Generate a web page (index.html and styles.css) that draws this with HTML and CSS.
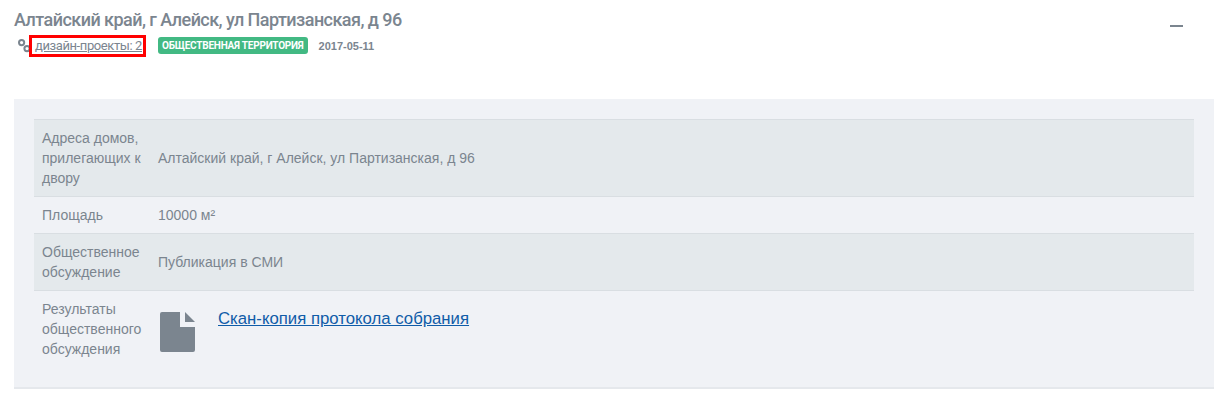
FILE: index.html
```html
<!DOCTYPE html>
<html lang="ru">
<head>
<meta charset="utf-8">
<title>Алтайский край</title>
<link rel="stylesheet" href="styles.css">
</head>
<body>
<header class="head">
  <div class="head-main">
    <h2 class="title">Алтайский край, г Алейск, ул Партизанская, д 96</h2>
    <div class="meta">
      <svg class="chain" viewBox="0 0 14 14" width="14" height="14"><g fill="none" stroke="#7b858f" stroke-width="2"><circle cx="3.6" cy="3.6" r="2.6"/><circle cx="9" cy="9.6" r="2.6"/></g></svg>
      <a class="projects" href="#">дизайн-проекты: 2</a>
      <span class="badge">ОБЩЕСТВЕННАЯ ТЕРРИТОРИЯ</span>
      <span class="date">2017-05-11</span>
    </div>
  </div>
  <span class="collapse"></span>
</header>
<section class="panel">
  <table class="info">
    <tr class="odd"><th>Адреса домов, прилегающих к двору</th><td>Алтайский край, г Алейск, ул Партизанская, д 96</td></tr>
    <tr><th>Площадь</th><td>10000 м²</td></tr>
    <tr class="odd"><th>Общественное обсуждение</th><td>Публикация в СМИ</td></tr>
    <tr class="last"><th>Результаты общественного обсуждения</th><td>
      <div class="doc">
        <svg class="doc-icon" viewBox="0 0 35 40" width="35" height="40"><path fill="#7b858f" d="M2 0H20V15H35V38a2 2 0 0 1-2 2H2a2 2 0 0 1-2-2V2a2 2 0 0 1 2-2Z"/><path fill="#7b858f" d="M25 0L35 10H25Z"/></svg>
        <a class="doc-link" href="#">Скан-копия протокола собрания</a>
      </div>
    </td></tr>
  </table>
</section>
</body>
</html>
```
FILE: styles.css
```css
* { box-sizing: border-box; }
html, body { margin: 0; padding: 0; background: #fff; }
body { width: 1224px; height: 402px; overflow: hidden; font-family: "Liberation Sans", Arial, sans-serif; font-size: 14px; color: #7b858f; }
.head { display: flex; justify-content: space-between; height: 99px; padding: 8px 41px 0 14px; }
.title { margin: 0; font-family: Roboto, sans-serif; font-size: 18px; font-weight: 500; line-height: 24px; letter-spacing: -0.55px; color: #7b858f; }
.meta { display: flex; align-items: center; height: 18px; margin-top: 5px; padding-left: 4px; }
.chain { flex: none; }
.projects { display: block; flex: none; width: 111px; height: 16px; padding-left: 3px; font-family: Roboto, sans-serif; font-size: 13px; line-height: 16px; letter-spacing: -0.4px; white-space: nowrap; color: #7b858f; text-decoration: underline; outline: 3px solid #f00; }
.badge { align-self: flex-start; margin-left: 15px; padding: 0 4px; height: 17px; line-height: 17px; border-radius: 3px; background: #42b983; color: #fff; font-family: Roboto, sans-serif; font-size: 10px; font-weight: 700; letter-spacing: -0.22px; }
.date { margin-left: 11px; font-size: 11px; font-weight: 700; }
.collapse { width: 13px; height: 2px; margin-top: 17px; background: #7b858f; }
.panel { width: 1200px; height: 290px; margin-left: 14px; padding: 20px; background: #f0f2f6; border-bottom: 2px solid #e5e8ec; }
.info { width: 100%; border-collapse: collapse; line-height: 20px; }
.info th, .info td { padding: 8px; border-top: 1px solid #d9dee2; vertical-align: middle; text-align: left; font-weight: 400; }
.info th { width: 116px; }
.info td { padding-left: 8px; }
.odd { background: #e4e9ec; }
.last td { vertical-align: top; }
.doc { display: flex; align-items: flex-start; padding: 5px 0 0 2px; }
.doc-icon { flex: none; margin-top: 8px; }
.doc-link { margin: 5px 0 0 23px; font-size: 16.75px; line-height: 20px; color: #0f5ca8; text-decoration: underline; }
```
